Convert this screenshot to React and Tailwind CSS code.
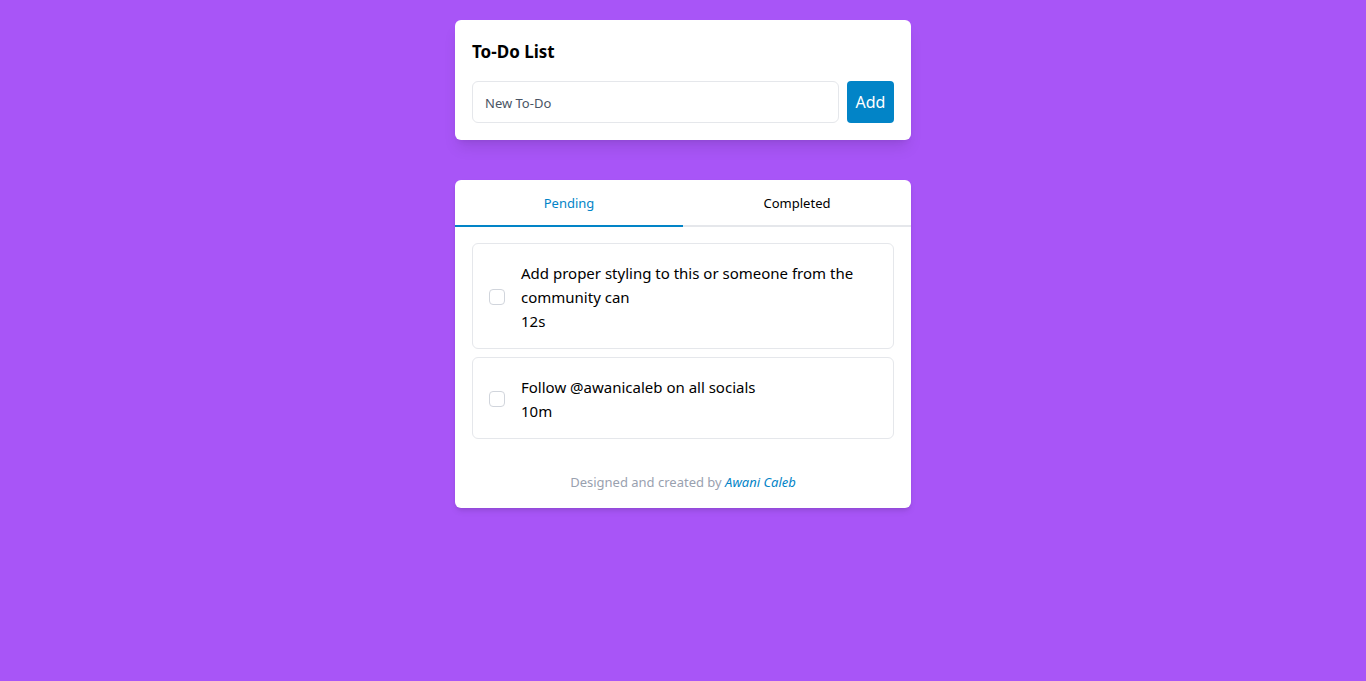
import { useState } from 'react';

const todos = [
  { id: 1, text: 'Add proper styling to this or someone from the community can', age: '12s' },
  { id: 2, text: 'Follow @awanicaleb on all socials', age: '10m' },
];

export default function App() {
  const [tab, setTab] = useState('pending');

  return (
    <div
      className="min-h-screen bg-[#a855f7] pt-5 flex flex-col items-center"
      style={{ fontFamily: '"Noto Sans", sans-serif' }}
    >
      <div className="w-[456px] bg-white rounded-md shadow-lg px-[17px] pt-[20px] pb-[17px]">
        <h1 className="text-[17px] font-bold text-black leading-6 mb-[17px]">To-Do List</h1>
        <div className="flex gap-2">
          <input
            className="flex-1 h-[42px] border border-gray-200 rounded-md px-3 pt-[2px] text-[13px] text-gray-700 placeholder:text-gray-600 outline-none"
            placeholder="New To-Do"
          />
          <button className="w-[47px] h-[42px] bg-[#0284c7] text-white text-base rounded-sm">Add</button>
        </div>
      </div>

      <div className="w-[456px] mt-10 bg-white rounded-md shadow-md">
        <div className="flex border-b-2 border-gray-200">
          <button
            onClick={() => setTab('pending')}
            className={`flex-1 h-[47px] pt-[3px] text-[13px] -mb-[2px] border-b-2 ${
              tab === 'pending' ? 'text-[#0284c7] border-[#0284c7]' : 'text-black border-transparent'
            }`}
          >
            Pending
          </button>
          <button
            onClick={() => setTab('completed')}
            className={`flex-1 h-[47px] pt-[3px] text-[13px] -mb-[2px] border-b-2 ${
              tab === 'completed' ? 'text-[#0284c7] border-[#0284c7]' : 'text-black border-transparent'
            }`}
          >
            Completed
          </button>
        </div>

        <div className="px-[17px] pt-4 space-y-2">
          {tab === 'pending' &&
            todos.map((t) => (
              <div key={t.id} className="flex items-center gap-4 border border-gray-200 rounded-md px-4 pt-[17px] pb-[15px]">
                <input type="checkbox" className="w-4 h-4 shrink-0 appearance-none border border-gray-300 rounded" />
                <div className="text-[15px] text-black leading-6">
                  <p>{t.text}</p>
                  <p>{t.age}</p>
                </div>
              </div>
            ))}
        </div>

        <p className="text-center text-[13px] text-gray-400 pt-[34px] pb-[15px]">
          Designed and created by <span className="italic text-[#0284c7]">Awani Caleb</span>
        </p>
      </div>
    </div>
  );
}
